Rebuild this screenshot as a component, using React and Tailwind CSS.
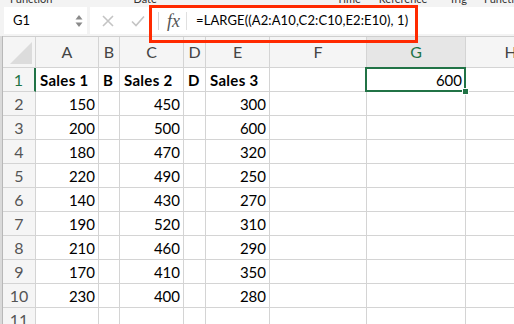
import React from 'react';

const cols = [
  { key: 'A', w: 'w-[63px]' },
  { key: 'B', w: 'w-[21px]' },
  { key: 'C', w: 'w-[64px]' },
  { key: 'D', w: 'w-[22px]' },
  { key: 'E', w: 'w-[64px]' },
  { key: 'F', w: 'w-[97px]' },
  { key: 'G', w: 'w-[99px]' },
  { key: 'H', w: 'w-[90px]' },
];

const rows = [
  ['Sales 1', 'B', 'Sales 2', 'D', 'Sales 3', '', '600', ''],
  ['150', '', '450', '', '300', '', '', ''],
  ['200', '', '500', '', '600', '', '', ''],
  ['180', '', '470', '', '320', '', '', ''],
  ['220', '', '490', '', '250', '', '', ''],
  ['140', '', '430', '', '270', '', '', ''],
  ['190', '', '520', '', '310', '', '', ''],
  ['210', '', '460', '', '290', '', '', ''],
  ['170', '', '410', '', '350', '', '', ''],
  ['230', '', '400', '', '280', '', '', ''],
  ['', '', '', '', '', '', '', ''],
];

function Cell({ col, value, row }) {
  const isHeader = row === 0;
  const selected = row === 0 && col.key === 'G';
  return (
    <div
      className={`${selected ? 'relative' : ''} ${col.w} shrink-0 h-full border-r border-b border-[#d4d4d4] flex items-center pt-[1px] ${
        isHeader && !selected ? 'justify-start pl-[4px] font-bold tracking-[0.3px]' : 'justify-end pr-[3px]'
      }`}
    >
      {value}
      {selected && (
        <div className="absolute z-10 left-[-2px] top-[-1px] right-[-1px] bottom-[-1px] border-2 border-[#217346]">
          <div className="absolute right-[-5px] bottom-[-5px] w-[7px] h-[7px] bg-[#217346] border border-white" />
        </div>
      )}
    </div>
  );
}

export default function App() {
  return (
    <div
      className="relative w-[514px] h-[324px] overflow-hidden bg-[#f3f3f3] text-black"
      style={{ fontFamily: 'Lato, "Open Sans", sans-serif' }}
    >
      {/* ribbon edge, cut off by the crop */}
      <div className="h-[6px] overflow-hidden bg-[#f3f3f3] text-[11px] text-[#333] leading-[13px]">
        <div className="flex -mt-[8px] h-[14px]">
          <span className="ml-[10px]">Function</span>
          <span className="ml-[10px] w-px h-full bg-[#c8c8c8]" />
          <span className="ml-[71px]">Date</span>
          <span className="ml-[180px]">Time</span>
          <span className="ml-[18px]">Reference</span>
          <span className="ml-[22px]">Trig</span>
          <span className="ml-[17px]">Functi</span>
        </div>
      </div>

      {/* formula bar */}
      <div className="flex h-[27px] pl-[4px] mt-[1px]">
        <div className="w-[83px] bg-white flex items-center pl-[9px] pr-[4px] text-[13px]">
          <span className="flex-1">G1</span>
          <svg width="8" height="16" viewBox="0 0 8 16">
            <path d="M4 2 L7.5 6.5 H0.5 Z" fill="#8a8a8a" />
            <path d="M4 14 L7.5 9.5 H0.5 Z" fill="#8a8a8a" />
          </svg>
        </div>
        <div className="ml-[3px] flex-1 bg-white flex items-center">
          <svg className="ml-[12px]" width="12" height="12" viewBox="0 0 12 12">
            <path d="M1 1 L11 11 M11 1 L1 11" stroke="#c4c4c4" strokeWidth="1.6" />
          </svg>
          <svg className="ml-[17px]" width="14" height="12" viewBox="0 0 14 12">
            <path d="M1 6.5 L5 10.5 L13 1.5" stroke="#c4c4c4" strokeWidth="1.6" fill="none" />
          </svg>
          <div className="ml-[13px] w-px h-[18px] bg-[#d4d4d4]" />
          <span
            className="ml-[8px] text-[18px] italic text-[#555] leading-none"
            style={{ fontFamily: '"Liberation Serif", serif' }}
          >
            fx
          </span>
          <div className="ml-[6px] w-px h-[18px] bg-[#e0e0e0]" />
          <span className="ml-[9px] text-[13px] tracking-[0.1px]">=LARGE((A2:A10,C2:C10,E2:E10), 1)</span>
        </div>
      </div>

      {/* sheet */}
      <div className="mt-[2px] flex">
        <div className="w-[3px] shrink-0 bg-[#dadada] border-r border-[#b8b8b8]" />
        <div className="flex-1 bg-white">
          {/* column headers */}
          <div className="flex h-[32px] bg-[#f5f5f5] border-t border-[#cfcfcf] text-[16px] text-[#444]">
            <div className="relative w-[33px] shrink-0 h-full border-r border-b border-[#d4d4d4]">
              <svg className="absolute right-[3px] bottom-[3px]" width="22" height="22" viewBox="0 0 22 22">
                <path d="M22 0 V22 H0 Z" fill="#dcdcdc" />
              </svg>
            </div>
            {cols.map((c) => (
              <div
                key={c.key}
                className={`${c.w} shrink-0 h-full border-r border-b border-[#d4d4d4] flex items-center justify-center ${
                  c.key === 'G' ? 'bg-[#e6e6e6] text-[#217346]' : ''
                }`}
              >
                {c.key}
              </div>
            ))}
          </div>

          {/* rows */}
          {rows.map((r, i) => (
            <div key={i} className="flex h-[24px] text-[15px]">
              <div
                className={`w-[33px] shrink-0 h-full border-b flex items-center justify-center pt-[1px] text-[16px] bg-[#f5f5f5] ${
                  i === 0
                    ? 'border-r-2 border-r-[#217346] border-b-[#d4d4d4] text-[#217346]'
                    : 'border-r border-[#d4d4d4] text-[#555]'
                }`}
              >
                {i + 1}
              </div>
              {cols.map((c, j) => (
                <Cell key={c.key} col={c} value={r[j]} row={i} />
              ))}
            </div>
          ))}
        </div>
      </div>

      {/* highlight around the formula */}
      <div className="absolute left-[149px] top-[5px] w-[269px] h-[38px] border-[3px] border-[#ff2a00]" />
    </div>
  );
}
